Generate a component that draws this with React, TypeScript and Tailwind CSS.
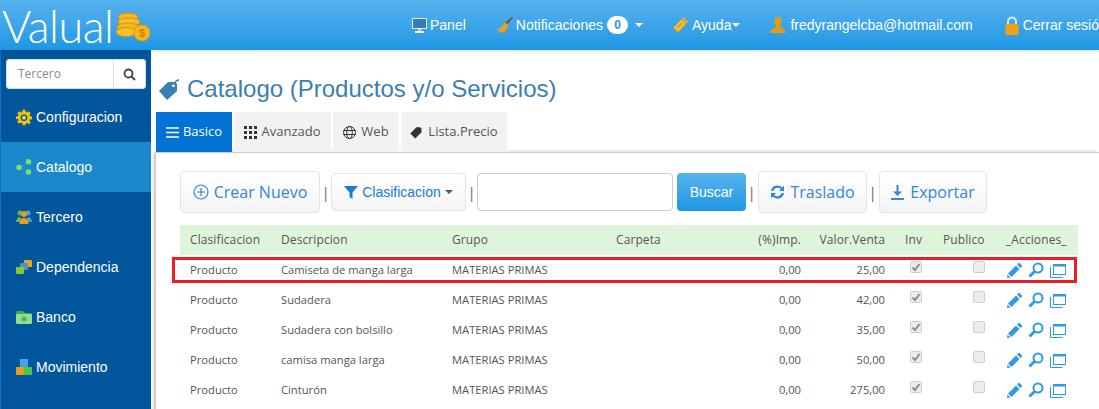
import React, { FC, ReactNode } from "react";

const arial = "font-['Liberation_Sans',Arial,sans-serif]";
const segoe = "font-['Open_Sans','Noto_Sans',sans-serif]";

const Monitor = () => (
  <svg width="17" height="17" viewBox="0 0 17 17">
    <rect x="1" y="1" width="15" height="11" rx="1" fill="#e6edf3" />
    <rect x="2" y="2" width="13" height="9" fill="#3a78b8" />
    <rect x="7" y="12" width="3" height="2" fill="#c9d3db" />
    <rect x="4" y="14" width="9" height="2" fill="#eef2f5" />
  </svg>
);

const Broom = () => (
  <svg width="18" height="18" viewBox="0 0 18 18">
    <path d="M16 1l1 1-6 6-2-1z" fill="#7a4a1c" />
    <path d="M9 6l3 3c0 3-2 6-5 8-1-1-1-1-2-1l-1 1-1-2-2-1 1-1c3-1 5-4 7-7z" fill="#e8a020" />
  </svg>
);

const Ticket = () => (
  <svg width="18" height="18" viewBox="0 0 18 18">
    <path d="M12 1l5 5-1 1c-1 0-1 1-1 1L7 17l-5-5 8-8s1 0 1-1z" fill="#f0a818" />
    <path d="M10 5l3 3-6 6-3-3z" fill="none" stroke="#fbd978" strokeWidth="1" />
  </svg>
);

const UserIco = () => (
  <svg width="18" height="18" viewBox="0 0 18 18">
    <path d="M9 1c2.500 0 3.500 2 3.500 4S11 9.500 11 10.500c0 1 5 2 6 6.500H1c1-4.500 6-5.500 6-6.500C7 9.500 5.500 7 5.500 5S6.500 1 9 1z" fill="#ea9a0c" />
  </svg>
);

const Lock = () => (
  <svg width="18" height="19" viewBox="0 0 18 19">
    <path d="M5 9V5.500a4 4 0 018 0V9" fill="none" stroke="#dfe6ec" strokeWidth="2" />
    <rect x="2.500" y="8" width="13" height="11" rx="1" fill="#f0a010" />
  </svg>
);

const Gear = () => (
  <svg width="17" height="17" viewBox="0 0 24 24">
    <path
      d="M10 1h4l.6 3.200 2 .8L19.300 3.200l2.800 2.800L20.200 8.700l.8 2L24 11v4l-3 .4-.8 1.900 1.900 2.700-2.800 2.800-2.700-1.900-2 .8L14 24h-4l-.6-3.300-2-.8-2.700 1.900-2.800-2.800 1.900-2.700-.8-1.900L0 15v-4l3-.3.8-2L1.900 6l2.800-2.800L7.400 5l2-.8z"
      fill="#f2c40f"
      transform="translate(0 -.5)"
    />
    <circle cx="12" cy="12.500" r="5" fill="#02569b" />
    <circle cx="12" cy="12.500" r="3" fill="#f6d23a" />
  </svg>
);

const Nodes = () => (
  <svg width="16" height="16" viewBox="0 0 16 16">
    <path d="M3 8.500L12.500 3M3 8.500L12.500 13" stroke="#3f9fc0" strokeWidth="1" />
    <circle cx="3" cy="8.500" r="2.700" fill="#74e46e" />
    <circle cx="12.500" cy="2.800" r="2.700" fill="#74e46e" />
    <circle cx="12.500" cy="13" r="2.700" fill="#74e46e" />
  </svg>
);

const People = () => (
  <svg width="16" height="14" viewBox="0 0 16 14">
    <circle cx="4" cy="3" r="2.500" fill="#63b55a" />
    <circle cx="12" cy="3" r="2.500" fill="#4a9fdc" />
    <path d="M0 12c0-3 2-5 4-5l3 5z" fill="#63b55a" />
    <path d="M16 12c0-3-2-5-4-5l-3 5z" fill="#4a9fdc" />
    <circle cx="8" cy="4" r="3" fill="#ef9a1c" />
    <path d="M3.500 14c0-4 2-6 4.500-6s4.500 2 4.500 6z" fill="#ef9a1c" />
  </svg>
);

const Blocks = () => (
  <svg width="16" height="14" viewBox="0 0 16 14">
    <rect x="8" y="0" width="8" height="7" rx="1" fill="#f0a418" />
    <rect x="4" y="3" width="8" height="7" rx="1" fill="#4f94cc" />
    <rect x="0" y="7" width="8" height="7" rx="1" fill="#86c82c" />
  </svg>
);

const Cash = () => (
  <svg width="16" height="13" viewBox="0 0 16 13">
    <path d="M0 2l1-2h6l2 2h6l1 1v2H0z" fill="#3fae4c" />
    <rect x="0" y="3" width="16" height="10" rx="1" fill="#8fdd92" />
    <circle cx="8" cy="8" r="2.500" fill="#4bb55a" />
  </svg>
);

const Cubes = () => (
  <svg width="16" height="16" viewBox="0 0 16 16">
    <rect x="4" y="0" width="8" height="8" rx="1" fill="#46a5e6" />
    <rect x="0" y="8" width="8" height="8" rx="1" fill="#f09a1a" />
    <rect x="8" y="8" width="8" height="8" rx="1" fill="#46c84a" />
  </svg>
);

const Coins = () => (
  <svg width="35" height="30" viewBox="0 0 35 30" className="ml-[2px]">
    <ellipse cx="12" cy="5" rx="10" ry="4" fill="#f5b81c" stroke="#d98f08" />
    <ellipse cx="13" cy="10" rx="11" ry="4" fill="#f7c030" stroke="#d98f08" />
    <ellipse cx="12" cy="15" rx="11" ry="4" fill="#f5b81c" stroke="#d98f08" />
    <ellipse cx="10" cy="20" rx="10" ry="4.500" fill="#f7c030" stroke="#d98f08" />
    <circle cx="26" cy="21" r="8" fill="#f5b81c" stroke="#e09a0c" />
    <text x="26" y="25" textAnchor="middle" fontSize="11" fontWeight="700" fill="#c97f06" fontFamily="Liberation Sans">$</text>
  </svg>
);

const NavItem: FC<{ icon: ReactNode; children: ReactNode; className?: string }> = ({ icon, children, className }) => (
  <div className={"flex items-center shrink-0 " + (className || "")}>
    {icon}
    <span>{children}</span>
  </div>
);

const Caret = ({ className = "" }: { className?: string }) => (
  <span className={"inline-block shrink-0 w-0 h-0 border-x-[4px] border-x-transparent border-t-[4px] border-t-white " + className} />
);

const MenuRow: FC<{ icon: ReactNode; label: string; active?: boolean }> = ({ icon, label, active }) => (
  <div className={"h-[50px] flex items-center pl-[15px] " + (active ? "bg-[#1a88cb]" : "")}>
    <span className="w-[16px] flex justify-center shrink-0">{icon}</span>
    <span className="ml-[4px]">{label}</span>
  </div>
);

const Pipe = ({ className = "" }: { className?: string }) => (
  <span className={"w-[3px] shrink-0 flex justify-center text-[15px] leading-none text-[#666] " + segoe + " " + className}>|</span>
);

const Check: FC<{ on?: boolean }> = ({ on }) => (
  <span className="block w-[12px] h-[12px] rounded-[2px] border border-[#cfcfcf] bg-[#ececec] relative top-[-3px]">
    {on && (
      <svg width="10" height="10" viewBox="0 0 10 10" className="block">
        <path d="M1.500 5.500L4 8l4.500-6" fill="none" stroke="#8c8c8c" strokeWidth="2" />
      </svg>
    )}
  </span>
);

const Actions = () => (
  <div className="flex items-center">
    <svg width="16" height="16" viewBox="0 0 16 16">
      <path d="M12 .5l3.500 3.500-2 2L10 2.500zM9 3.500L12.500 7l-8 8L1 11.500zM.5 12.500L3.500 15.500 0 16z" fill="#2f9ae6" />
    </svg>
    <svg width="16" height="16" viewBox="0 0 16 16" className="ml-[5px]">
      <circle cx="10" cy="6" r="4.500" fill="none" stroke="#2f9ae6" strokeWidth="2" />
      <path d="M6.500 9.500L1.500 14.500" stroke="#2f9ae6" strokeWidth="3" />
    </svg>
    <svg width="16" height="15" viewBox="0 0 16 15" className="ml-[6px]">
      <rect x="3.500" y="1.500" width="12" height="10" fill="#fff" stroke="#2f9ae6" />
      <rect x="3" y="1" width="13" height="2.500" fill="#2f9ae6" />
      <path d="M.5 4v10.500h12" fill="none" stroke="#2f9ae6" />
    </svg>
  </div>
);

const rows: [string, string, string, string][] = [
  ["Producto", "Camiseta de manga larga", "MATERIAS PRIMAS", "25,00"],
  ["Producto", "Sudadera", "MATERIAS PRIMAS", "42,00"],
  ["Producto", "Sudadera con bolsillo", "MATERIAS PRIMAS", "35,00"],
  ["Producto", "camisa manga larga", "MATERIAS PRIMAS", "50,00"],
  ["Producto", "Cinturón", "MATERIAS PRIMAS", "275,00"],
];

const gridCols = "grid grid-cols-[91px_171px_164px_115px_90px_84px_38px_63px_82px]";

const ToolButton: FC<{ children: ReactNode; className?: string }> = ({ children, className }) => (
  <div className={"h-[42px] shrink-0 flex items-center justify-center rounded-[4px] border border-[#e4e4e4] bg-gradient-to-b from-white to-[#f4f4f4] text-[16px] text-[#3585d8] " + segoe + " " + (className || "")}>
    {children}
  </div>
);

export default function App() {
  return (
    <div className={"w-[1099px] h-[409px] overflow-hidden bg-white flex flex-col " + arial}>
      <header className="h-[50px] shrink-0 bg-gradient-to-b from-[#55b2ee] to-[#1b97e5] flex items-center text-white text-[14px] relative z-10 shadow-[0_1px_3px_rgba(0,0,0,0.15)] whitespace-nowrap">
        <div className="w-[411px] shrink-0 flex items-center pl-[2px] pt-[3px]">
          <span className="font-['Lato',sans-serif] font-light text-[45px] leading-none tracking-[-0.5px]">Valual</span>
          <Coins />
        </div>
        <NavItem className="gap-[2px]" icon={<Monitor />}>Panel</NavItem>
        <NavItem className="ml-[30px] gap-[2px]" icon={<Broom />}>Notificaciones</NavItem>
        <span className="ml-[4px] shrink-0 w-[21px] h-[18px] rounded-full bg-white text-[#3a8fd8] text-[12px] font-bold leading-[18px] text-center">0</span>
        <Caret className="ml-[7px]" />
        <NavItem className="ml-[28px] gap-[3px]" icon={<Ticket />}>Ayuda</NavItem>
        <Caret className="ml-[1px]" />
        <NavItem className="ml-[29px] gap-[3px]" icon={<UserIco />}>fredyrangelcba@hotmail.com</NavItem>
        <NavItem className="ml-[30px] gap-[2px]" icon={<Lock />}>Cerrar sesión</NavItem>
      </header>

      <div className="flex flex-1 min-h-0">
        <aside className="w-[151px] shrink-0 bg-[#02569b] text-white text-[14px] border-l border-[#0b72c4]">
          <div className="h-[42px] pt-[9px] pl-[5px]">
            <div className={"w-[140px] h-[30px] bg-white rounded-[3px] flex items-center border border-[#ddd] " + segoe}>
              <span className="w-[106px] pl-[11px] text-[12px] text-[#8a8a8a]">Tercero</span>
              <span className="flex-1 h-full border-l border-[#ddd] flex items-center justify-center">
                <svg width="13" height="13" viewBox="0 0 13 13">
                  <circle cx="5.500" cy="5.500" r="4" fill="none" stroke="#444" strokeWidth="1.800" />
                  <path d="M8.500 8.500L12 12" stroke="#444" strokeWidth="2" />
                </svg>
              </span>
            </div>
          </div>
          <MenuRow icon={<Gear />} label="Configuracion" />
          <MenuRow icon={<Nodes />} label="Catalogo" active />
          <MenuRow icon={<People />} label="Tercero" />
          <MenuRow icon={<Blocks />} label="Dependencia" />
          <MenuRow icon={<Cash />} label="Banco" />
          <MenuRow icon={<Cubes />} label="Movimiento" />
        </aside>

        <main className="flex-1 min-w-0 pl-[5px] relative">
          <div className="h-[62px] flex items-end pb-[11px] pl-[3px]">
            <svg width="21" height="21" viewBox="0 0 21 21" className="mb-[1px]">
              <path d="M9 3h7l2 2v7L8 21 0 12z" fill="#3a7fb0" />
              <circle cx="14.500" cy="6.500" r="1.500" fill="#fff" />
              <path d="M15 6C16 3 18 1 20 1" fill="none" stroke="#3a7fb0" strokeWidth="1.500" />
            </svg>
            <h1 className="ml-[7px] text-[24px] leading-none text-[#3a7fb0]">Catalogo (Productos y/o Servicios)</h1>
          </div>

          <div className={"h-[40px] flex gap-[2px] text-[13px] text-[#555] " + segoe}>
            <div className="w-[76px] bg-[#0273d4] text-white flex items-center justify-center gap-[4px]">
              <svg width="13" height="11" viewBox="0 0 13 11">
                <path d="M0 1h13M0 5.500h13M0 10h13" stroke="#fff" strokeWidth="1.300" />
              </svg>
              Basico
            </div>
            <div className="w-[97px] bg-[#f2f2f2] flex items-center justify-center gap-[4px]">
              <svg width="13" height="13" viewBox="0 0 13 13" fill="#333">
                <path d="M0 0h3v3H0zM5 0h3v3H5zM10 0h3v3h-3zM0 5h3v3H0zM5 5h3v3H5zM10 5h3v3h-3zM0 10h3v3H0zM5 10h3v3H5zM10 10h3v3h-3z" />
              </svg>
              Avanzado
            </div>
            <div className="w-[66px] bg-[#f2f2f2] flex items-center justify-center gap-[5px]">
              <svg width="13" height="13" viewBox="0 0 13 13" fill="none" stroke="#333">
                <circle cx="6.500" cy="6.500" r="6" />
                <ellipse cx="6.500" cy="6.500" rx="2.800" ry="6" />
                <path d="M.5 4.500h12M.5 8.500h12" />
              </svg>
              Web
            </div>
            <div className="w-[106px] bg-[#f2f2f2] flex items-center justify-center gap-[5px]">
              <svg width="13" height="13" viewBox="0 0 20 21">
                <path d="M10 2h6l2 2v6L8 20 0 12z" fill="#333" />
              </svg>
              Lista.Precio
            </div>
          </div>

          <div className="h-[300px] bg-white border-t border-[#ccc] shadow-[-2px_0_3px_rgba(0,0,0,0.25)] pl-[24px] pt-[18px]">
            <div className="flex items-center h-[42px]">
              <ToolButton className="w-[140px] gap-[5px]">
                <svg width="16" height="16" viewBox="0 0 16 16" fill="none" stroke="#3585d8" strokeWidth="1.200">
                  <circle cx="8" cy="8" r="7" />
                  <path d="M8 4v8M4 8h8" />
                </svg>
                Crear Nuevo
              </ToolButton>
              <Pipe className="ml-[4px]" />
              <div className={"ml-[4px] shrink-0 w-[135px] h-[38px] rounded-[4px] border border-[#e4e4e4] bg-gradient-to-b from-white to-[#f4f4f4] flex items-center justify-center text-[14px] text-[#1a7bd8] " + arial}>
                <svg width="14" height="13" viewBox="0 0 14 13" className="mr-[4px]">
                  <path d="M0 0h14L8.500 6.500V13l-3-2V6.500z" fill="#1a7bd8" />
                </svg>
                Clasificacion
                <span className="ml-[4px] inline-block w-0 h-0 border-x-[4px] border-x-transparent border-t-[4px] border-t-[#555]" />
              </div>
              <Pipe className="ml-[4px]" />
              <div className="ml-[4px] shrink-0 w-[196px] h-[38px] rounded-[4px] border border-[#ccc] bg-white" />
              <div className="ml-[4px] shrink-0 w-[69px] h-[38px] rounded-[4px] bg-gradient-to-b from-[#55b2ee] to-[#1b97e5] text-white text-[14px] flex items-center justify-center">Buscar</div>
              <Pipe className="ml-[4px]" />
              <ToolButton className="ml-[5px] w-[109px] gap-[5px]">
                <svg width="15" height="14" viewBox="0 0 15 14" fill="#3585d8">
                  <path d="M1 6C1.500 2.500 4 .5 7.500.5c2 0 3.500.8 4.700 2L14 .8V6H9l1.800-1.900C9.900 3.200 8.800 2.800 7.500 2.800 5.600 2.800 4 4 3.400 6zM14 8c-.5 3.500-3 5.500-6.500 5.500-2 0-3.500-.8-4.700-2L1 13.200V8h5l-1.800 1.900c.9.900 2 1.300 3.300 1.300 1.900 0 3.500-1.200 4.100-3.200z" />
                </svg>
                Traslado
              </ToolButton>
              <Pipe className="ml-[4px]" />
              <ToolButton className="ml-[5px] w-[108px] gap-[6px]">
                <svg width="13" height="15" viewBox="0 0 13 15" fill="#3585d8">
                  <path d="M5.500 0h2v6.500H11L6.500 11 2 6.500h3.500zM0 13h13v2H0z" />
                </svg>
                Exportar
              </ToolButton>
            </div>

            <div className={"mt-[12px] w-[898px] text-[#555] " + segoe}>
              <div className={gridCols + " h-[30px] items-center bg-[#dff5db] text-[12px] tracking-[0.1px]"}>
                <span className="pl-[10px]">Clasificacion</span>
                <span className="pl-[10px]">Descripcion</span>
                <span className="pl-[10px]">Grupo</span>
                <span className="pl-[10px]">Carpeta</span>
                <span className="text-right pr-[10px]">(%)Imp.</span>
                <span className="text-right pr-[10px]">Valor.Venta</span>
                <span className="pl-[10px]">Inv</span>
                <span className="pl-[10px]">Publico</span>
                <span className="pl-[10px]">_Acciones_</span>
              </div>
              {rows.map((r, i) => (
                <div key={i} className={gridCols + " h-[30px] items-center text-[11.2px]"}>
                  <span className="pl-[10px]">{r[0]}</span>
                  <span className="pl-[10px]">{r[1]}</span>
                  <span className="pl-[10px]">{r[2]}</span>
                  <span />
                  <span className="text-right pr-[10px]">0,00</span>
                  <span className="text-right pr-[10px]">{r[3]}</span>
                  <span className="pl-[15px]"><Check on /></span>
                  <span className="pl-[40px]"><Check /></span>
                  <span className="pl-[11px]"><Actions /></span>
                </div>
              ))}
            </div>
          </div>

          <div className="absolute left-[21px] top-[207px] w-[905px] h-[26px] border-[3px] border-[#ed1c24]" />
        </main>
      </div>
    </div>
  );
}
